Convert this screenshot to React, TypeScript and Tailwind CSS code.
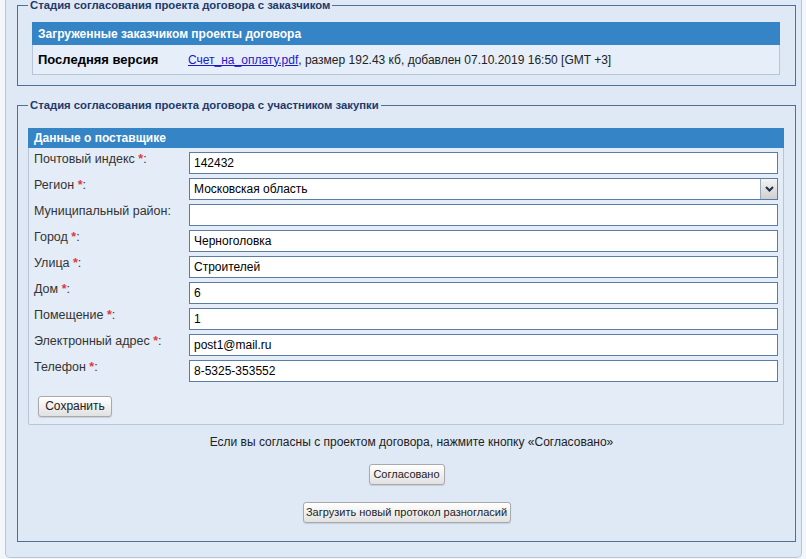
import React from "react";

type Field = { label: string; value: string; required?: boolean; select?: boolean };

const fields: Field[] = [
  { label: "Почтовый индекс", value: "142432", required: true },
  { label: "Регион", value: "Московская область", required: true, select: true },
  { label: "Муниципальный район:", value: "" },
  { label: "Город", value: "Черноголовка", required: true },
  { label: "Улица", value: "Строителей", required: true },
  { label: "Дом", value: "6", required: true },
  { label: "Помещение", value: "1", required: true },
  { label: "Электронный адрес", value: "post1@mail.ru", required: true },
  { label: "Телефон", value: "8-5325-353552", required: true },
];

function Btn({ children, className = "" }: { children: React.ReactNode; className?: string }) {
  return (
    <button
      className={`h-[21px] px-0 whitespace-nowrap rounded-[3px] border border-[#a9a9a9] bg-gradient-to-b from-white to-[#e1e1e1] text-[11px] leading-[19px] text-[#222] shadow-[0_1px_1px_rgba(0,0,0,0.12)] ${className}`}
    >
      {children}
    </button>
  );
}

function FormRow({ f }: { f: Field }) {
  return (
    <div className="flex h-[22px] mb-[4px]">
      <div className="w-[155px] shrink-0 text-[12.5px] leading-[14px] text-[#333]">
        {f.required ? (
          <>
            {f.label} <span className="text-[#e03a3a] font-bold">*</span>:
          </>
        ) : (
          f.label
        )}
      </div>
      {f.select ? (
        <div className="flex-1 flex h-[22px] border border-[#5b7ca4] bg-white">
          <div className="flex-1 pl-[4px] text-[12px] leading-[20px] text-black">{f.value}</div>
          <div className="w-[17px] flex items-center justify-center border-l border-[#9aa9bb] bg-gradient-to-b from-[#f4f4f4] to-[#cfcfcf]">
            <svg width="9" height="6" viewBox="0 0 9 6">
              <path d="M1 1 L4.5 4.5 L8 1" fill="none" stroke="#1f2f4f" strokeWidth="2" />
            </svg>
          </div>
        </div>
      ) : (
        <div className="flex-1 h-[22px] border border-[#5b7ca4] bg-white pl-[4px] text-[12px] leading-[20px] text-black">
          {f.value}
        </div>
      )}
    </div>
  );
}

export default function App() {
  return (
    <div className="min-h-screen bg-[#f3f6fb] font-['Liberation_Sans',Arial,sans-serif]">
      <div className="ml-[5px] w-[797px] h-[558px] overflow-hidden bg-[#dfe8f5] border-x border-b border-[#b7c5d8] rounded-b-[5px] pl-[11px] pr-[5px]">
        {/* Stage 1 */}
        <fieldset className="-mt-[2px] border border-[#4f6f98] px-[10px] pb-[10px]">
          <legend className="px-[2px] text-[11.3px] font-bold leading-[14px] text-[#1d3a6b]">
            Стадия согласования проекта договора с заказчиком
          </legend>
          <div className="mt-[10px] mx-[4px] mr-[5px]">
            <div className="h-[23px] bg-[#3584c6] pl-[6px] flex items-center text-[12px] font-bold text-white">
              Загруженные заказчиком проекты договора
            </div>
            <div className="h-[30px] flex items-center pl-[5px] border-x border-b border-[#b8c5d6] bg-[#e6eef9] text-[12px] text-[#222]">
              <div className="w-[150px] text-[13px] font-bold text-black">Последняя версия</div>
              <div>
                <a className="text-[#1a1acc] underline">Счет_на_оплату.pdf</a>, размер 192.43 кб, добавлен 07.10.2019 16:50 [GMT +3]
              </div>
            </div>
          </div>
        </fieldset>

        {/* Stage 2 */}
        <fieldset className="mt-[12px] border border-[#4f6f98] px-[10px] pb-[18px]">
          <legend className="px-[2px] text-[11.3px] font-bold leading-[14px] text-[#1d3a6b]">
            Стадия согласования проекта договора с участником закупки
          </legend>
          <div className="mt-[16px] mr-[1px]">
            <div className="h-[20px] bg-[#3584c6] pl-[6px] flex items-center text-[12px] font-bold text-white">
              Данные о поставщике
            </div>
            <div className="border-x border-b border-[#b8c5d6] rounded-b-[2px] bg-[#e4ecf8] pt-[4px] px-[5px] pb-[7px]">
              {fields.map((f) => (
                <FormRow key={f.label} f={f} />
              ))}
              <Btn className="mt-[10px] ml-[4px] w-[74px] text-[12px]">Сохранить</Btn>
            </div>
          </div>
          <div className="mt-[10px] pl-[10px] text-center text-[12px] leading-[14px] text-[#222]">
            Если вы согласны с проектом договора, нажмите кнопку «Согласовано»
          </div>
          <div className="mt-[15px] flex justify-center">
            <Btn className="w-[76px]">Согласовано</Btn>
          </div>
          <div className="mt-[17px] flex justify-center">
            <Btn className="w-[208px]">Загрузить новый протокол разногласий</Btn>
          </div>
        </fieldset>
      </div>
    </div>
  );
}
